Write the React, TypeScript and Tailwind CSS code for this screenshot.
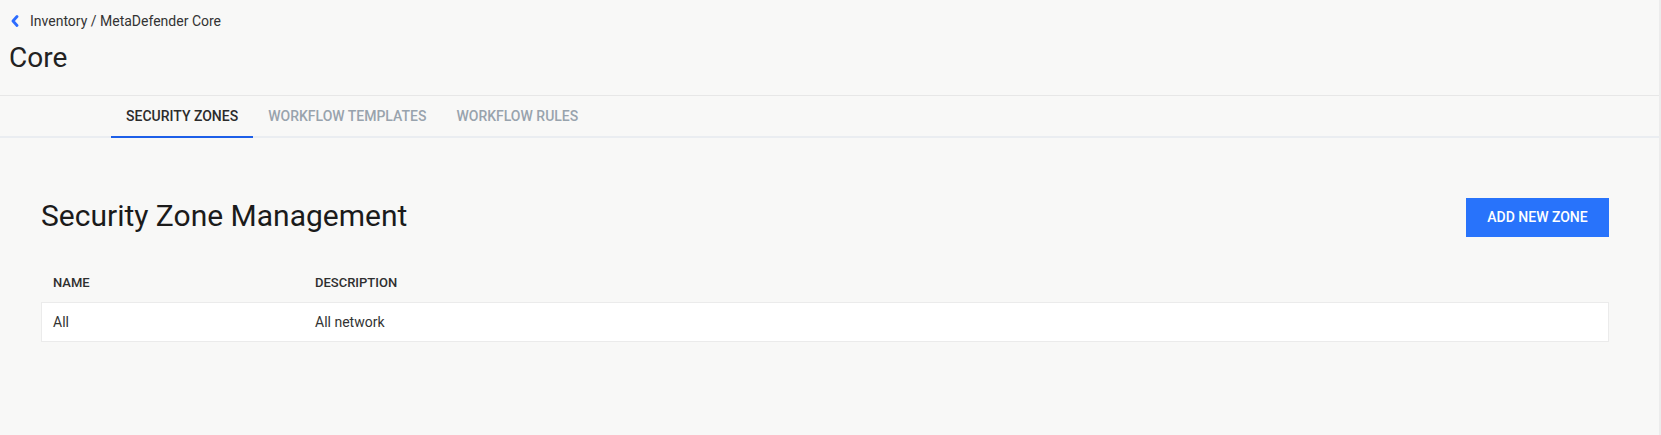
const tabs = [
  { label: "SECURITY ZONES", active: true },
  { label: "WORKFLOW TEMPLATES", active: false },
  { label: "WORKFLOW RULES", active: false },
];

const zones = [{ name: "All", description: "All network" }];

function ChevronLeft() {
  return (
    <svg width="8" height="12" viewBox="0 0 8 12" fill="none" className="shrink-0">
      <path d="M6 1.5 L2 6 L6 10.5" stroke="#2c6cff" strokeWidth="2.8" strokeLinecap="round" strokeLinejoin="round" />
    </svg>
  );
}

export default function App() {
  return (
    <div className="min-h-[435px] bg-[#f8f8f7] font-['Roboto',sans-serif] text-[#333333]">
      <div className="min-h-[435px] w-[1661px] border-r-2 border-[#ececec]">
        {/* header */}
        <div className="h-[96px] border-b border-[#e7e7e7] px-[9px] pt-[11px]">
          <div className="flex h-5 items-center gap-[11px] pl-[2px]">
            <ChevronLeft />
            <span className="text-[14px] text-[#333333]">Inventory / MetaDefender Core</span>
          </div>
          <h1 className="mt-[9px] text-[28px] leading-[36px] text-[#222222]">Core</h1>
        </div>

        {/* tabs */}
        <div className="flex h-[42px] border-b-2 border-[#eaedf1] pl-[111px]">
          {tabs.map((tab) => (
            <div
              key={tab.label}
              className={
                tab.active
                  ? "-mb-[2px] flex items-center border-b-2 border-[#1d5fe8] px-[15px] text-[14px] font-medium text-[#2b2b2b]"
                  : "flex items-center px-[15px] text-[14px] font-medium text-[#98a3ad]"
              }
            >
              {tab.label}
            </div>
          ))}
        </div>

        {/* content */}
        <div className="pl-[41px] pr-[50px] pt-[60px]">
          <div className="flex items-start justify-between">
            <h2 className="text-[30px] leading-[36px] text-[#1b1b1b]">Security Zone Management</h2>
            <button className="h-[39px] w-[143px] bg-[#2873fb] text-[14px] font-medium text-white">
              ADD NEW ZONE
            </button>
          </div>

          <div className="mt-[26px]">
            <div className="flex h-[39px] items-center pl-[12px] text-[13px] font-medium text-[#2f2f2f]">
              <div className="w-[262px]">NAME</div>
              <div>DESCRIPTION</div>
            </div>
            {zones.map((zone) => (
              <div
                key={zone.name}
                className="flex h-[40px] items-center border border-[#ebebeb] bg-white pl-[11px] text-[14px] text-[#333333]"
              >
                <div className="w-[262px]">{zone.name}</div>
                <div>{zone.description}</div>
              </div>
            ))}
          </div>
        </div>
      </div>
    </div>
  );
}
